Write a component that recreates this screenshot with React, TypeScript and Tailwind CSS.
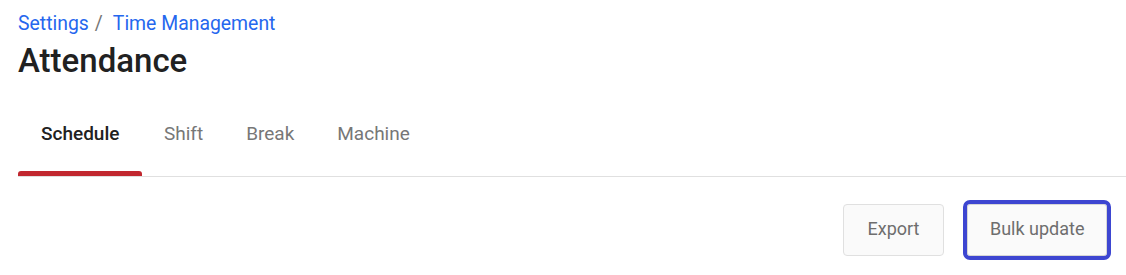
import { useState } from "react";

const tabs = ["Schedule", "Shift", "Break", "Machine"];

const App = () => {
  const [active, setActive] = useState("Schedule");

  return (
    <div className="w-[1126px] h-[275px] bg-white font-['Roboto',sans-serif] overflow-hidden">
      <div className="px-[18px] pt-[12px]">
        <nav className="flex items-center text-[19.4px] leading-[24px]">
          <a href="#" className="text-[#2567ee]">
            Settings
          </a>
          <span className="text-[#757575] ml-[6px] mr-[10px]">/</span>
          <a href="#" className="text-[#2567ee]">
            Time Management
          </a>
        </nav>
        <h1 className="mt-[5px] text-[33px] leading-[40px] font-medium text-[#212121]">
          Attendance
        </h1>
      </div>

      <div className="ml-[18px] mt-[13px] flex border-b border-[#e0e0e0]">
        {tabs.map((tab) => {
          const isActive = tab === active;
          return (
            <button
              key={tab}
              onClick={() => setActive(tab)}
              className={
                isActive
                  ? "flex flex-col px-[23px] pt-[28px]"
                  : "flex flex-col px-[21.5px] pt-[28px]"
              }
            >
              <span
                className={
                  isActive
                    ? "text-[19px] leading-[24px] font-medium text-[#212121]"
                    : "text-[19px] leading-[24px] text-[#777777]"
                }
              >
                {tab}
              </span>
              <span
                className={
                  isActive
                    ? "mt-[25px] -mx-[23px] h-[5px] rounded-t-[3px] bg-[#c1272f]"
                    : "mt-[25px] h-[5px]"
                }
              />
            </button>
          );
        })}
      </div>

      <div className="flex justify-end gap-[23px] px-[19px] mt-[27px]">
        <button className="h-[52px] px-[24px] pb-[3px] rounded-[4px] border border-[#e0e0e0] bg-[#fafafa] text-[18px] text-[#6e6e6e]">
          Export
        </button>
        <button className="h-[52px] px-[21.5px] pb-[3px] rounded-[3px] border border-[#d6d6d6] bg-[#fafafa] text-[18px] text-[#6e6e6e] outline-[4px] outline-solid outline-[#3d46d1]">
          Bulk update
        </button>
      </div>
    </div>
  );
};

export default App;
